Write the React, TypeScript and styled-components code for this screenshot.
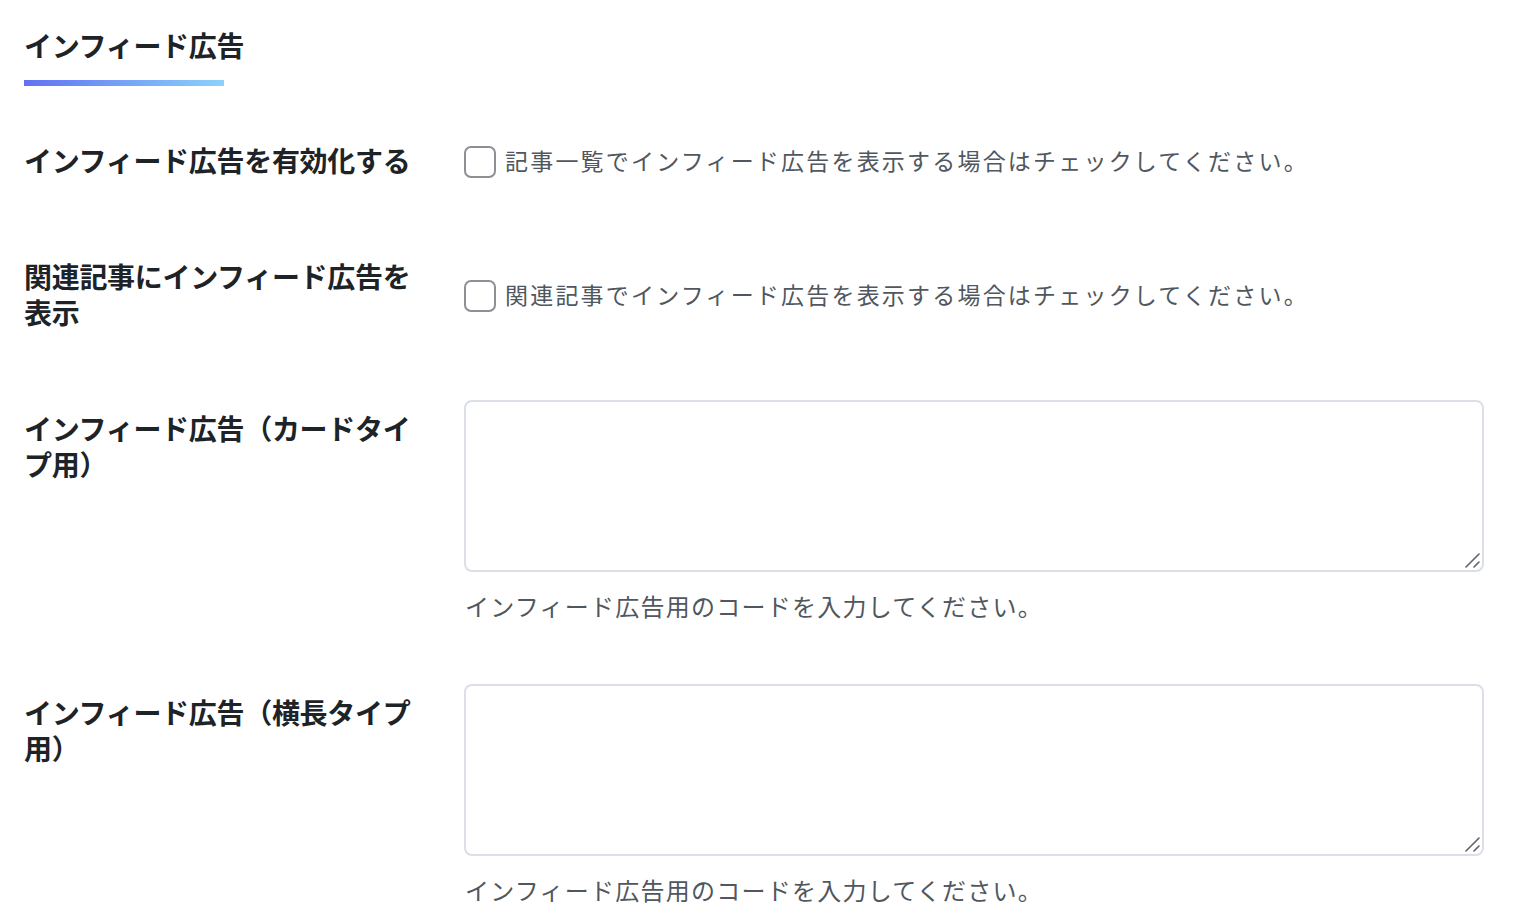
import styled, { createGlobalStyle } from "styled-components";

const GlobalStyle = createGlobalStyle`
  html, body {
    margin: 0;
    padding: 0;
    background: #ffffff;
  }
  body {
    font-family: "Noto Sans CJK JP", "Noto Sans", sans-serif;
    color: #1d2327;
  }
`;

const Page = styled.div`
  width: 1514px;
  box-sizing: border-box;
  padding: 27px 30px 0 24px;
`;

const SectionTitle = styled.h2`
  margin: 0;
  font-size: 28px;
  line-height: 36px;
  font-weight: 700;
  letter-spacing: -0.3px;
  color: #1d2327;
  display: inline-block;
  &::after {
    content: "";
    display: block;
    width: 200px;
    height: 6px;
    margin-top: 17px;
    background: linear-gradient(90deg, #6171f4 0%, #8bd3fa 100%);
  }
`;

const FormTable = styled.div`
  display: flex;
  flex-direction: column;
  margin-top: 16px;
`;

const Row = styled.div`
  display: grid;
  grid-template-columns: 440px 1fr;
`;

const Label = styled.div`
  align-self: start;
  padding: 40px 30px 40px 0;
  font-size: 28px;
  line-height: 36px;
  font-weight: 700;
  letter-spacing: -0.3px;
  color: #1d2327;
`;

const Field = styled.div`
  align-self: center;
  padding: 30px 0;
  display: flex;
  flex-direction: column;
`;

const CheckLabel = styled.label`
  display: flex;
  align-items: center;
  font-size: 23px;
  line-height: 36px;
  letter-spacing: 2.2px;
  color: #50575e;
  cursor: pointer;
`;

const Checkbox = styled.input.attrs({ type: "checkbox" })`
  appearance: none;
  width: 32px;
  height: 32px;
  margin: 4px 9px 0 0;
  box-sizing: border-box;
  border: 2px solid #8c8f94;
  border-radius: 7px;
  background: #fff;
  flex-shrink: 0;
`;

const AreaWrap = styled.div`
  position: relative;
  width: 1020px;
  height: 172px;
`;

const CodeArea = styled.textarea`
  width: 100%;
  height: 100%;
  box-sizing: border-box;
  border: 2px solid #dcdfe8;
  border-radius: 8px;
  background: #fff;
  resize: none;
  outline: none;
  padding: 8px 12px;
  font-family: "Liberation Mono", monospace;
  font-size: 22px;
`;

const Grip = styled.svg`
  position: absolute;
  right: 4px;
  bottom: 4px;
  width: 16px;
  height: 16px;
  pointer-events: none;
`;

const Help = styled.p`
  margin: 16px 0 0 1px;
  font-size: 24px;
  line-height: 36px;
  letter-spacing: 1.25px;
  color: #50575e;
`;

const ResizeGrip = () => (
  <Grip viewBox="0 0 16 16">
    <path d="M2 15 L15 2 M10 15 L15 10" stroke="#5f6368" strokeWidth="1.6" strokeLinecap="round" />
  </Grip>
);

const CodeField = () => (
  <Field>
    <AreaWrap>
      <CodeArea />
      <ResizeGrip />
    </AreaWrap>
    <Help>インフィード広告用のコードを入力してください。</Help>
  </Field>
);

export default function App() {
  return (
    <>
      <GlobalStyle />
      <Page>
        <SectionTitle>インフィード広告</SectionTitle>
        <FormTable>
          <Row>
            <Label>インフィード広告を有効化する</Label>
            <Field>
              <CheckLabel>
                <Checkbox />
                記事一覧でインフィード広告を表示する場合はチェックしてください。
              </CheckLabel>
            </Field>
          </Row>
          <Row>
            <Label>関連記事にインフィード広告を表示</Label>
            <Field>
              <CheckLabel>
                <Checkbox />
                関連記事でインフィード広告を表示する場合はチェックしてください。
              </CheckLabel>
            </Field>
          </Row>
          <Row>
            <Label>インフィード広告（カードタイプ用）</Label>
            <CodeField />
          </Row>
          <Row>
            <Label>インフィード広告（横長タイプ用）</Label>
            <CodeField />
          </Row>
        </FormTable>
      </Page>
    </>
  );
}
